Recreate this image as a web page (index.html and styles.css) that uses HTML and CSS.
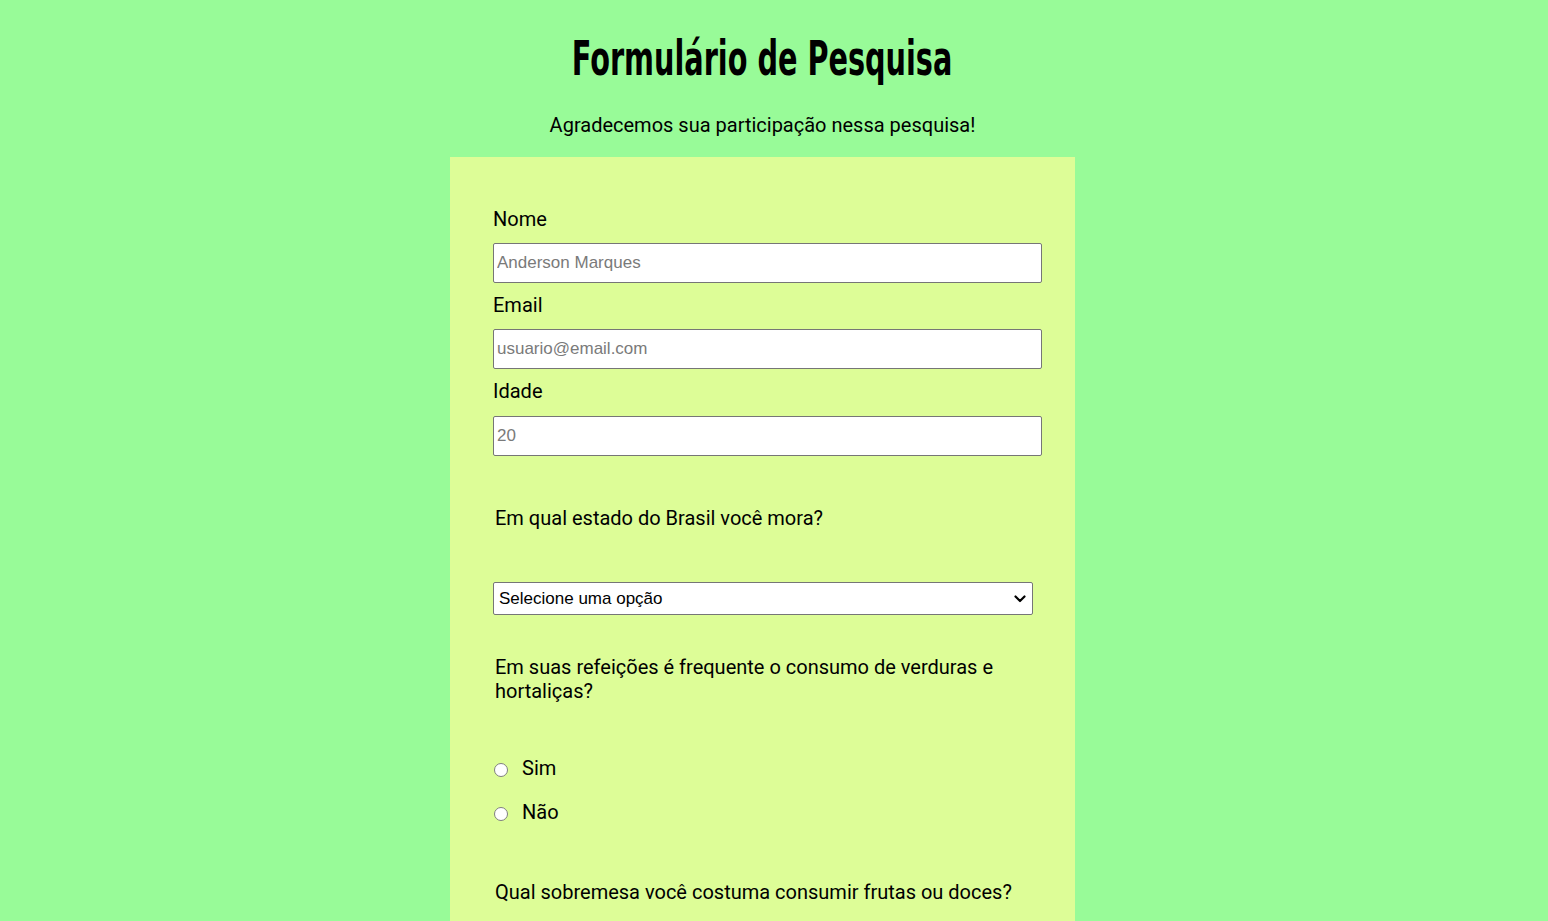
FILE: index.html
```html
<!DOCTYPE html>
<html lang="pt-BR">
<head>
<meta charset="utf-8">
<title>Formulário de Pesquisa</title>
<link rel="stylesheet" href="styles.css">
</head>
<body>
<main class="page">
  <header class="header">
    <h1 class="title"><span class="title-text">Formulário de Pesquisa</span></h1>
    <p class="subtitle">Agradecemos sua participação nessa pesquisa!</p>
  </header>
  <form class="survey">
    <div class="field">
      <label class="label" for="nome">Nome</label>
      <input class="input" id="nome" type="text" placeholder="Anderson Marques">
    </div>
    <div class="field">
      <label class="label" for="email">Email</label>
      <input class="input" id="email" type="email" placeholder="usuario@email.com">
    </div>
    <div class="field">
      <label class="label" for="idade">Idade</label>
      <input class="input" id="idade" type="number" placeholder="20">
    </div>
    <p class="question q-estado">Em qual estado do Brasil você mora?</p>
    <div class="select-wrap">
      <select class="select">
        <option>Selecione uma opção</option>
      </select>
      <svg class="chevron" width="12" height="8" viewBox="0 0 12 8" aria-hidden="true"><path d="M1.5 1.5 L6 6 L10.5 1.5" fill="none" stroke="#000" stroke-width="2.2" stroke-linecap="round" stroke-linejoin="round"/></svg>
    </div>
    <p class="question q-verduras">Em suas refeições é frequente o consumo de verduras e hortaliças?</p>
    <div class="radios">
      <label class="radio"><input type="radio" name="verduras"><span>Sim</span></label>
      <label class="radio"><input type="radio" name="verduras"><span>Não</span></label>
    </div>
    <p class="question q-sobremesa">Qual sobremesa você costuma consumir frutas ou doces?</p>
  </form>
</main>
</body>
</html>
```
FILE: styles.css
```css
html, body {
  margin: 0;
  padding: 0;
}
body {
  background: #98fb98;
  font-family: Roboto, "Liberation Sans", sans-serif;
  color: #000;
}
.page {
  width: 1525px;
  display: flex;
  flex-direction: column;
  align-items: center;
}
.header {
  display: flex;
  flex-direction: column;
  align-items: center;
}
.title {
  margin: 30px 0 0;
  height: 56px;
  font-family: "Liberation Sans Narrow", "DejaVu Sans Condensed", sans-serif;
  font-weight: 700;
  font-size: 48px;
  line-height: 56px;
}
.title-text {
  display: inline-block;
  transform: scaleX(0.665);
}
.subtitle {
  margin: 27px 0 0;
  font-size: 20px;
  line-height: 24px;
}
.survey {
  box-sizing: border-box;
  width: 625px;
  margin-top: 20px;
  background: #ddfd97;
  padding: 50px 33px 40px 43px;
  display: flex;
  flex-direction: column;
  align-items: flex-start;
}
.field {
  display: flex;
  flex-direction: column;
  align-items: flex-start;
  width: 100%;
  margin-bottom: 10px;
}
.field:nth-child(3) .label {
  margin-bottom: 13px;
}
.label {
  font-size: 20px;
  line-height: 24px;
  margin-bottom: 12px;
}
.input {
  box-sizing: border-box;
  width: 549px;
  height: 40px;
  margin: 0;
  padding: 0 3px;
  border: 1px solid #767676;
  border-radius: 2px;
  background: #fff;
  font-family: "Liberation Sans", Arial, sans-serif;
  font-size: 17px;
}
.input::placeholder {
  color: #7a7a7a;
}
.question {
  margin: 0;
  padding-left: 2px;
  font-size: 20px;
  line-height: 24px;
}
.q-estado {
  margin-top: 40px;
}
.select-wrap {
  position: relative;
  margin-top: 52px;
  width: 540px;
  height: 33px;
}
.select {
  box-sizing: border-box;
  -webkit-appearance: none;
  appearance: none;
  width: 540px;
  height: 33px;
  margin: 0;
  padding: 0 30px 0 5px;
  border: 1px solid #767676;
  border-radius: 2px;
  background: #fff;
  font-family: "Liberation Sans", Arial, sans-serif;
  font-size: 17px;
  color: #000;
}
.chevron {
  position: absolute;
  right: 7px;
  top: 13px;
  pointer-events: none;
}
.q-verduras {
  margin-top: 40px;
  width: 520px;
}
.radios {
  display: flex;
  flex-direction: column;
  gap: 20px;
  margin-top: 53px;
}
.radio {
  display: flex;
  align-items: center;
  font-size: 20px;
  line-height: 24px;
}
.radio input {
  -webkit-appearance: none;
  appearance: none;
  box-sizing: border-box;
  margin: 3px 14px 0 1px;
  width: 14px;
  height: 14px;
  border: 1px solid #7f7f7f;
  border-radius: 50%;
  background: #fff;
}
.q-sobremesa {
  margin-top: 56px;
}
```
